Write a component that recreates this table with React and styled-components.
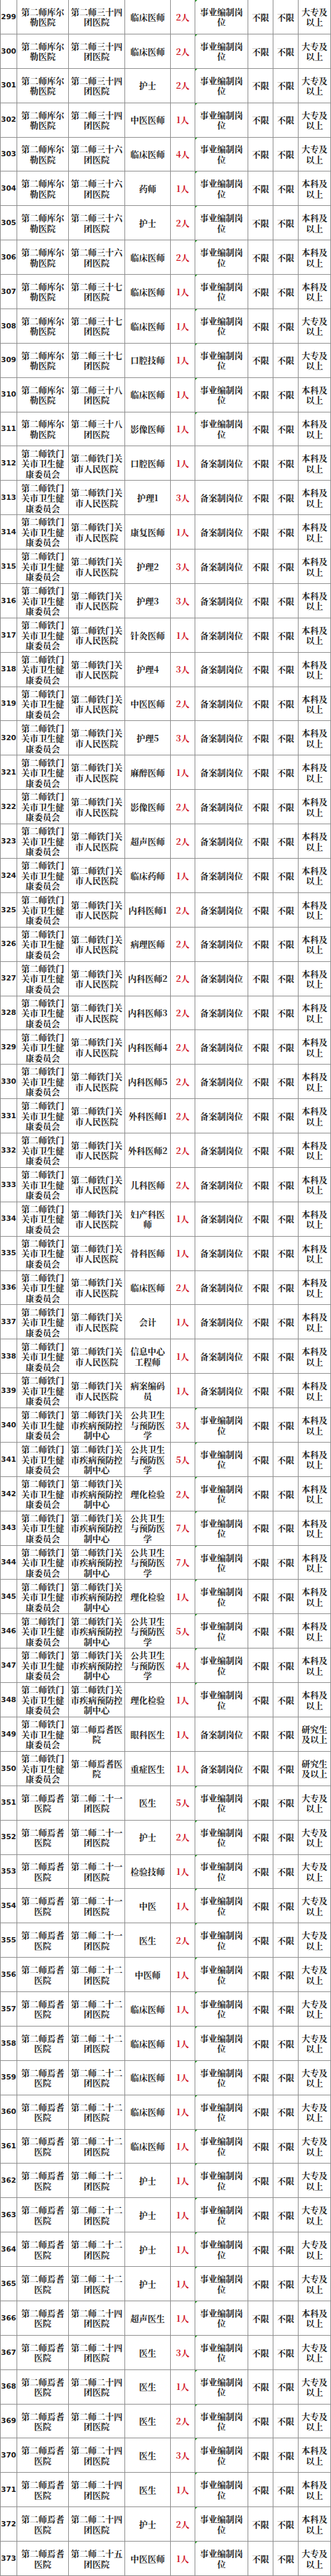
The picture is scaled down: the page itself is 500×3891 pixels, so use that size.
import React from "react";
import styled, { createGlobalStyle, css } from "styled-components";

const GlobalStyle = createGlobalStyle`
  html, body { margin: 0; padding: 0; background: #ffffff; }
  body { width: 500px; }
`;

const KORLA = "第二师库尔勒医院";
const HEALTH = "第二师铁门关市卫生健康委员会";
const YANQI = "第二师焉耆医院";
const PEOPLE = "第二师铁门关市人民医院";
const CDC = "第二师铁门关市疾病预防控制中心";
const PH = "公共卫生与预防医学";
const SY = "事业编制岗位";
const BA = "备案制岗位";
const DZ = "大专及以上";
const BK = "本科及以上";
const YJS = "研究生及以上";
const tuan = (n) => `第二师${n}团医院`;

// [no, unit, employer, post, count, kind, edu]
const rows = [
  [299, KORLA, tuan("三十四"), "临床医师", 2, SY, DZ],
  [300, KORLA, tuan("三十四"), "临床医师", 2, SY, DZ],
  [301, KORLA, tuan("三十四"), "护士", 2, SY, DZ],
  [302, KORLA, tuan("三十四"), "中医医师", 1, SY, DZ],
  [303, KORLA, tuan("三十六"), "临床医师", 4, SY, DZ],
  [304, KORLA, tuan("三十六"), "药师", 1, SY, BK],
  [305, KORLA, tuan("三十六"), "护士", 2, SY, BK],
  [306, KORLA, tuan("三十六"), "临床医师", 2, SY, BK],
  [307, KORLA, tuan("三十七"), "临床医师", 1, SY, BK],
  [308, KORLA, tuan("三十七"), "临床医师", 1, SY, DZ],
  [309, KORLA, tuan("三十七"), "口腔技师", 1, SY, DZ],
  [310, KORLA, tuan("三十八"), "临床医师", 1, SY, BK],
  [311, KORLA, tuan("三十八"), "影像医师", 1, SY, BK],
  [312, HEALTH, PEOPLE, "口腔医师", 1, BA, BK],
  [313, HEALTH, PEOPLE, "护理1", 3, BA, BK],
  [314, HEALTH, PEOPLE, "康复医师", 1, BA, BK],
  [315, HEALTH, PEOPLE, "护理2", 3, BA, BK],
  [316, HEALTH, PEOPLE, "护理3", 3, BA, BK],
  [317, HEALTH, PEOPLE, "针灸医师", 1, BA, BK],
  [318, HEALTH, PEOPLE, "护理4", 3, BA, BK],
  [319, HEALTH, PEOPLE, "中医医师", 2, BA, BK],
  [320, HEALTH, PEOPLE, "护理5", 3, BA, BK],
  [321, HEALTH, PEOPLE, "麻醉医师", 1, BA, BK],
  [322, HEALTH, PEOPLE, "影像医师", 2, BA, BK],
  [323, HEALTH, PEOPLE, "超声医师", 2, BA, BK],
  [324, HEALTH, PEOPLE, "临床药师", 1, BA, BK],
  [325, HEALTH, PEOPLE, "内科医师1", 2, BA, BK],
  [326, HEALTH, PEOPLE, "病理医师", 2, BA, BK],
  [327, HEALTH, PEOPLE, "内科医师2", 2, BA, BK],
  [328, HEALTH, PEOPLE, "内科医师3", 2, BA, BK],
  [329, HEALTH, PEOPLE, "内科医师4", 2, BA, BK],
  [330, HEALTH, PEOPLE, "内科医师5", 2, BA, BK],
  [331, HEALTH, PEOPLE, "外科医师1", 2, BA, BK],
  [332, HEALTH, PEOPLE, "外科医师2", 2, BA, BK],
  [333, HEALTH, PEOPLE, "儿科医师", 2, BA, BK],
  [334, HEALTH, PEOPLE, "妇产科医师", 1, BA, BK],
  [335, HEALTH, PEOPLE, "骨科医师", 1, BA, BK],
  [336, HEALTH, PEOPLE, "临床医师", 2, BA, BK],
  [337, HEALTH, PEOPLE, "会计", 1, BA, BK],
  [338, HEALTH, PEOPLE, "信息中心工程师", 1, BA, BK],
  [339, HEALTH, PEOPLE, "病案编码员", 1, BA, BK],
  [340, HEALTH, CDC, PH, 3, SY, BK],
  [341, HEALTH, CDC, PH, 5, SY, BK],
  [342, HEALTH, CDC, "理化检验", 2, SY, BK],
  [343, HEALTH, CDC, PH, 7, SY, BK],
  [344, HEALTH, CDC, PH, 7, SY, BK],
  [345, HEALTH, CDC, "理化检验", 1, SY, BK],
  [346, HEALTH, CDC, PH, 5, SY, BK],
  [347, HEALTH, CDC, PH, 4, SY, BK],
  [348, HEALTH, CDC, "理化检验", 1, SY, BK],
  [349, HEALTH, YANQI, "眼科医生", 1, BA, YJS],
  [350, HEALTH, YANQI, "重症医生", 1, BA, YJS],
  [351, YANQI, tuan("二十一"), "医生", 5, SY, DZ],
  [352, YANQI, tuan("二十一"), "护士", 2, SY, DZ],
  [353, YANQI, tuan("二十一"), "检验技师", 1, SY, DZ],
  [354, YANQI, tuan("二十一"), "中医", 1, SY, DZ],
  [355, YANQI, tuan("二十一"), "医生", 2, SY, DZ],
  [356, YANQI, tuan("二十二"), "中医师", 1, SY, DZ],
  [357, YANQI, tuan("二十二"), "临床医师", 1, SY, DZ],
  [358, YANQI, tuan("二十二"), "临床医师", 1, SY, DZ],
  [359, YANQI, tuan("二十二"), "临床医师", 1, SY, DZ],
  [360, YANQI, tuan("二十二"), "临床医师", 1, SY, DZ],
  [361, YANQI, tuan("二十二"), "临床医师", 1, SY, DZ],
  [362, YANQI, tuan("二十二"), "护士", 1, SY, DZ],
  [363, YANQI, tuan("二十二"), "护士", 1, SY, DZ],
  [364, YANQI, tuan("二十二"), "护士", 1, SY, DZ],
  [365, YANQI, tuan("二十二"), "护士", 1, SY, DZ],
  [366, YANQI, tuan("二十四"), "超声医生", 1, SY, BK],
  [367, YANQI, tuan("二十四"), "医生", 3, SY, DZ],
  [368, YANQI, tuan("二十四"), "医生", 1, SY, DZ],
  [369, YANQI, tuan("二十四"), "医生", 2, SY, DZ],
  [370, YANQI, tuan("二十四"), "医生", 3, SY, BK],
  [371, YANQI, tuan("二十四"), "医生", 1, SY, BK],
  [372, YANQI, tuan("二十四"), "护士", 2, SY, BK],
  [373, YANQI, tuan("二十五"), "中医医师", 1, SY, DZ],
];

const Sheet = styled.div`
  display: grid;
  grid-template-columns: 26px 78px 85px 69px 37px 80px 38px 38px 49px;
  grid-template-rows: repeat(${rows.length}, 1fr);
  width: 500px;
  height: 3891px;
  background: #ffffff;
  font-family: "Noto Serif CJK SC", "Noto Sans CJK SC", serif;
  font-size: 13px;
  font-weight: 700;
  line-height: 15.5px;
  color: #1e1e1e;
`;

const Cell = styled.div`
  position: relative;
  box-sizing: border-box;
  display: flex;
  align-items: center;
  justify-content: center;
  text-align: center;
  padding: 0 3px;
  border-right: 1px solid #8c8c8c;
  border-bottom: 1px solid #8c8c8c;
  overflow: hidden;
  ${(p) =>
    p.$first &&
    css`
      border-left: 1px solid #8c8c8c;
      padding: 0;
    `}
  ${(p) =>
    p.$flag &&
    css`
      &::before {
        content: "";
        position: absolute;
        left: 0;
        top: 0;
        border-top: 3px solid #1f9a1f;
        border-right: 3px solid transparent;
      }
    `}
`;

const RowNo = styled.span`
  font-family: "DejaVu Sans", "Liberation Sans", sans-serif;
  font-size: 11px;
  font-weight: 700;
  color: #1e1e1e;
`;

const Count = styled.span`
  color: #d0101c;
  font-weight: 700;
`;

const Text = styled.span`
  display: block;
  word-break: break-all;
`;

export default function App() {
  return (
    <>
      <GlobalStyle />
      <Sheet>
        {rows.map(([no, unit, employer, post, count, kind, edu]) => (
          <React.Fragment key={no}>
            <Cell $first>
              <RowNo>{no}</RowNo>
            </Cell>
            <Cell>
              <Text>{unit}</Text>
            </Cell>
            <Cell>
              <Text>{employer}</Text>
            </Cell>
            <Cell>
              <Text>{post}</Text>
            </Cell>
            <Cell>
              <Count>{count}人</Count>
            </Cell>
            <Cell $flag={kind === SY}>
              <Text>{kind}</Text>
            </Cell>
            <Cell>
              <Text>不限</Text>
            </Cell>
            <Cell>
              <Text>不限</Text>
            </Cell>
            <Cell>
              <Text>{edu}</Text>
            </Cell>
          </React.Fragment>
        ))}
      </Sheet>
    </>
  );
}
